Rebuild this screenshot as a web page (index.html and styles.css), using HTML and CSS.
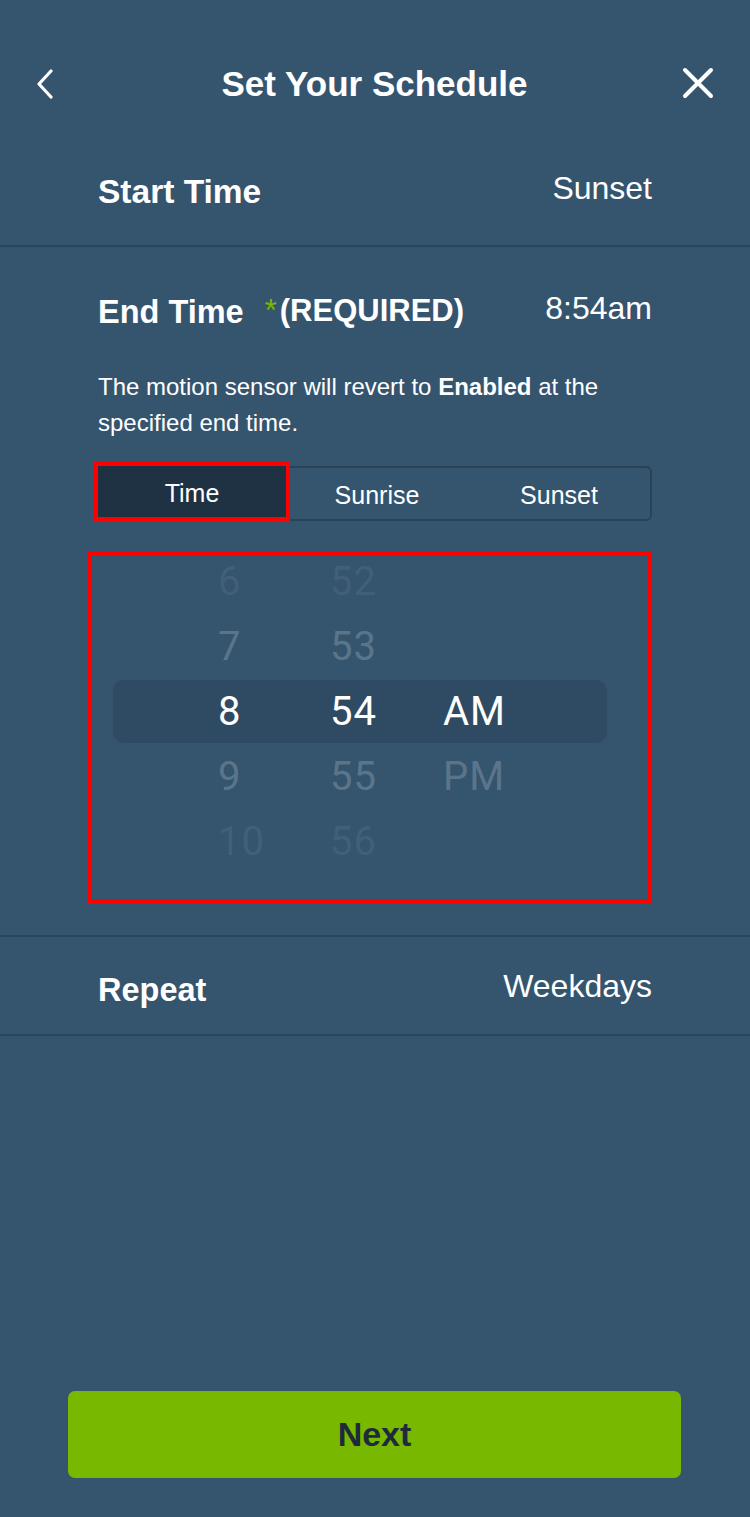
FILE: index.html
```html
<!DOCTYPE html>
<html lang="en">

<head>
    <meta charset="UTF-8">
    <title>Set Your Schedule</title>
    <link rel="stylesheet" href="styles.css">
</head>

<body>
    <div id="page">
        <header id="header">
            <button class="icon-button">
                <svg width="20" height="30" viewBox="0 0 20 30">
                    <path d="M16 2 L4 15 L16 28" fill="none" stroke="#fff" stroke-width="3.2" stroke-linecap="round" stroke-linejoin="round" />
                </svg>
            </button>
            <h1>Set Your Schedule</h1>
            <button class="icon-button close">
                <svg width="32" height="32" viewBox="0 0 32 32">
                    <path d="M3 3 L29 29 M29 3 L3 29" fill="none" stroke="#fff" stroke-width="4" stroke-linecap="round" />
                </svg>
            </button>
        </header>

        <section class="row start-row">
            <span class="label">Start Time</span>
            <span class="value">Sunset</span>
        </section>

        <section class="end-section">
            <div class="end-head">
                <span class="label">End Time</span>
                <span class="required"><span class="star">*</span>(REQUIRED)</span>
                <span class="value">8:54am</span>
            </div>
            <p class="note">The motion sensor will revert to <strong>Enabled</strong> at the specified end time.</p>

            <div class="segments">
                <div class="segment selected">Time</div>
                <div class="segment">Sunrise</div>
                <div class="segment">Sunset</div>
            </div>

            <div class="picker">
                <div class="wheel">
                    <div class="wheel-row far"><span>6</span><span>52</span><span></span></div>
                    <div class="wheel-row near"><span>7</span><span>53</span><span></span></div>
                    <div class="wheel-row current"><span>8</span><span>54</span><span>AM</span></div>
                    <div class="wheel-row near"><span>9</span><span>55</span><span>PM</span></div>
                    <div class="wheel-row far"><span>10</span><span>56</span><span></span></div>
                </div>
            </div>
        </section>

        <section class="row repeat-row">
            <span class="label">Repeat</span>
            <span class="value">Weekdays</span>
        </section>

        <footer id="footer">
            <button class="next-button">Next</button>
        </footer>
    </div>
</body>

</html>
```

FILE: styles.css
```css
body {
    margin: 0;
    background-color: #35556f;
    color: #fff;
    font-family: "Liberation Sans", Arial, sans-serif;
}

#page {
    min-height: 1517px;
    display: flex;
    flex-direction: column;
}

#header {
    margin-top: 56px;
    height: 56px;
    padding: 0 36px 0 35px;
    display: grid;
    grid-template-columns: 1fr auto 1fr;
    align-items: center;
}

#header h1 {
    margin: 0;
    font-size: 35px;
    font-weight: 700;
}

.icon-button {
    background: none;
    border: none;
    padding: 0;
    display: flex;
    align-items: center;
}

.icon-button.close {
    justify-self: end;
    margin-top: -3px;
}

.row {
    display: flex;
    justify-content: space-between;
    align-items: flex-start;
    padding: 0 98px;
    border-bottom: 2px solid #2b4559;
}

.label {
    font-size: 32.5px;
    line-height: 38px;
    font-weight: 700;
}

.start-row .label {
    font-size: 33.5px;
}

.value {
    font-size: 32px;
    line-height: 38px;
    margin-top: -4px;
}

.start-row {
    padding-top: 61px;
    padding-bottom: 34px;
}

.end-section {
    padding: 46px 98px 32px;
    border-bottom: 2px solid #2b4559;
}

.end-head {
    display: flex;
    align-items: flex-start;
}

.required {
    margin-left: 21px;
    font-size: 31px;
    line-height: 36px;
    font-weight: 700;
    flex: 1;
}

.star {
    color: #7ab800;
    font-weight: 400;
    margin-right: 3px;
}

.note {
    margin: 38px 0 0;
    font-size: 24px;
    line-height: 36px;
}

.segments {
    margin-top: 25px;
    height: 55px;
    box-sizing: border-box;
    border: 2px solid #2a4256;
    border-radius: 6px;
    display: grid;
    grid-template-columns: 186px 1fr 1fr;
}

.segment {
    display: flex;
    align-items: center;
    justify-content: center;
    font-size: 25px;
    padding-top: 3px;
}

.segment.selected {
    background: #1f3244;
    margin: -2px 0 2px -2px;
    outline: 4px solid #ff0000;
}

.picker {
    margin: 30px 0 0 -10px;
    height: 352px;
    box-sizing: border-box;
    border: 4px solid #ff0000;
    overflow: hidden;
    font-family: Roboto, "Liberation Sans", sans-serif;
}

.wheel {
    margin-top: -6px;
}

.wheel-row {
    height: 65px;
    margin: 0 41px 0 21px;
    padding-left: 105px;
    display: grid;
    grid-template-columns: 112px 113px 1fr;
    align-items: center;
    font-size: 40px;
}

.wheel-row span {
    letter-spacing: 1px;
}

.wheel-row.near {
    color: rgba(255, 255, 255, 0.2);
}

.wheel-row.far {
    color: rgba(255, 255, 255, 0.08);
}

.wheel-row.current {
    background: #2f4b63;
    border-radius: 11px;
    height: 63px;
    margin-top: 1px;
    margin-bottom: 1px;
}

.repeat-row {
    padding-top: 34px;
    padding-bottom: 25px;
}

#footer {
    margin-top: auto;
    padding: 0 69px 39px 68px;
}

.next-button {
    width: 100%;
    height: 87px;
    border: none;
    border-radius: 7px;
    background: #78b800;
    color: #1f2b3d;
    font-family: "Liberation Sans", Arial, sans-serif;
    font-size: 34px;
    font-weight: 700;
}
```
